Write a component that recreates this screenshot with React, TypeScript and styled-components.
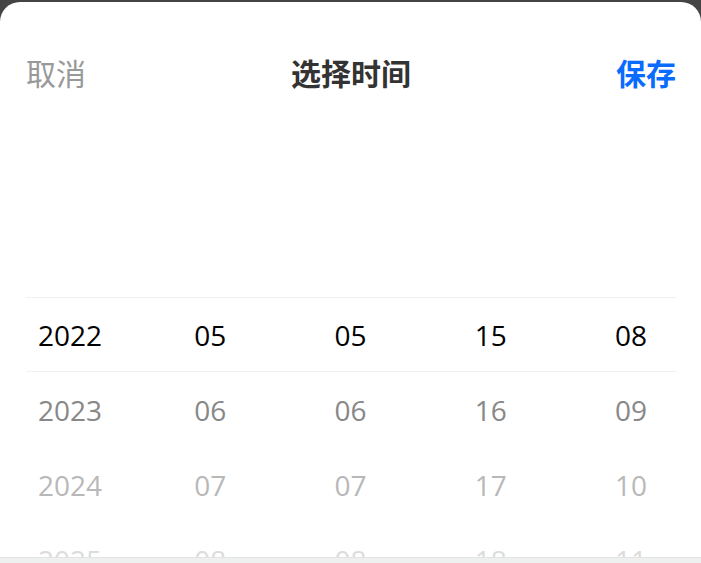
import styled, { createGlobalStyle } from 'styled-components';

const GlobalStyle = createGlobalStyle`
  html, body {
    margin: 0;
    padding: 0;
    background: #444444;
  }
  * {
    box-sizing: border-box;
  }
`;

const Page = styled.div`
  width: 701px;
  height: 563px;
  padding-top: 2px;
  display: flex;
  flex-direction: column;
  background: #444444;
  overflow: hidden;
`;

const Sheet = styled.div`
  flex: 1;
  display: flex;
  flex-direction: column;
  background: #fff;
  border-radius: 20px 20px 0 0;
  overflow: hidden;
  font-family: "Open Sans", "Noto Sans CJK SC", sans-serif;
`;

const Header = styled.div`
  height: 145px;
  flex-shrink: 0;
  display: flex;
  align-items: center;
  justify-content: space-between;
  padding: 0 25px 6px 26px;
`;

const HeaderBtn = styled.span<{ $primary?: boolean }>`
  font-family: "Noto Sans CJK SC", sans-serif;
  font-size: 30px;
  line-height: 1;
  color: ${(p) => (p.$primary ? '#0a6cff' : '#999999')};
  font-weight: ${(p) => (p.$primary ? 700 : 400)};
`;

const Title = styled.span`
  font-family: "Noto Sans CJK SC", sans-serif;
  font-size: 30px;
  line-height: 1;
  font-weight: 700;
  color: #333333;
`;

const PickerView = styled.div`
  flex: 1;
  position: relative;
  display: flex;
  overflow: hidden;
`;

const Indicator = styled.div`
  position: absolute;
  left: 26px;
  right: 25px;
  top: 150px;
  height: 75px;
  border-top: 1px solid #f0f0f0;
  border-bottom: 1px solid #f0f0f0;
  pointer-events: none;
`;

const Column = styled.div`
  flex: 1;
  display: flex;
  flex-direction: column;
  padding-top: 150px;
`;

const Item = styled.div<{ $dist: number }>`
  height: 75px;
  flex-shrink: 0;
  display: flex;
  align-items: center;
  justify-content: center;
  font-size: 28px;
  color: ${(p) => ['#000000', '#888888', '#b8b8b8', '#dcdcdc'][p.$dist] ?? '#eeeeee'};
`;

const Footer = styled.div`
  height: 6px;
  flex-shrink: 0;
  background: #eef0ef;
  border-top: 1px solid #e2e4e3;
`;

const pad = (n: number) => String(n).padStart(2, '0');

const columns: string[][] = [
  [2022, 2023, 2024, 2025].map(String),
  [5, 6, 7, 8].map(pad),
  [5, 6, 7, 8].map(pad),
  [15, 16, 17, 18].map(pad),
  [8, 9, 10, 11].map(pad),
];

export default function App() {
  return (
    <>
      <GlobalStyle />
      <Page>
        <Sheet>
          <Header>
            <HeaderBtn>取消</HeaderBtn>
            <Title>选择时间</Title>
            <HeaderBtn $primary>保存</HeaderBtn>
          </Header>
          <PickerView>
            <Indicator />
            {columns.map((col, ci) => (
              <Column key={ci}>
                {col.map((v, i) => (
                  <Item key={v} $dist={i}>
                    {v}
                  </Item>
                ))}
              </Column>
            ))}
          </PickerView>
        </Sheet>
        <Footer />
      </Page>
    </>
  );
}
